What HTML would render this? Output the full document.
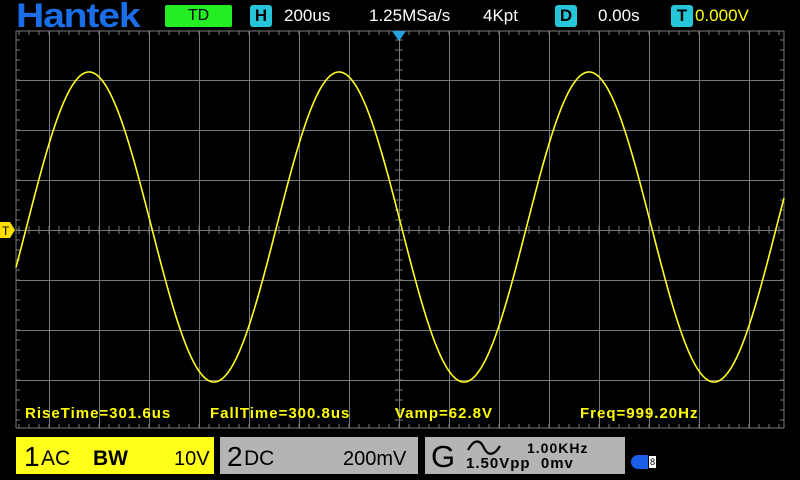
<!DOCTYPE html><html><head><style>
body{margin:0;width:800px;height:480px;background:#000;overflow:hidden;position:relative;font-family:"Liberation Sans",sans-serif}
.a{position:absolute}
.top{color:#fff;font-size:17px;top:6px}
.ic{background:#26c6da;color:#000;font-weight:bold;font-size:17px;width:22px;height:22px;text-align:center;line-height:22px;border-radius:3px;top:5px}
.m{color:#ffff00;font-size:15px;top:405px;font-weight:bold;letter-spacing:1px}
</style></head><body>
<div class="a" style="left:16px;top:-1px;line-height:34px;color:#1a6fe8;font-size:34px;font-weight:bold;letter-spacing:-1px;transform:scaleX(1.15);transform-origin:left">Hantek</div>
<div class="a" style="left:165px;top:5px;width:67px;height:22px;background:#22ee22;border-radius:2px;text-align:center;line-height:22px;font-size:16px">TD</div>
<div class="a ic" style="left:250px">H</div>
<div class="a top" style="left:284px">200us</div>
<div class="a top" style="left:369px">1.25MSa/s</div>
<div class="a top" style="left:483px">4Kpt</div>
<div class="a ic" style="left:555px">D</div>
<div class="a top" style="left:598px">0.00s</div>
<div class="a ic" style="left:671px">T</div>
<div class="a top" style="left:695px;color:#ffff00">0.000V</div>
<svg class="a" style="left:0;top:0" width="800" height="480" id="s">
<g stroke="#7a7a7a" stroke-width="1" fill="none" id="g"></g>
<polygon points="392,31 406,31 399,41" fill="#26a0e0"/>
<polygon points="0,222 10,222 15,230 10,238 0,238" fill="#ffe000"/>
<text x="2" y="235" font-size="12" font-family="Liberation Sans">T</text>
<path id="w" stroke="#ffff22" stroke-width="1.6" fill="none"/>
</svg>
<div class="a m" style="left:25px">RiseTime=301.6us</div>
<div class="a m" style="left:210px">FallTime=300.8us</div>
<div class="a m" style="left:395px">Vamp=62.8V</div>
<div class="a m" style="left:580px">Freq=999.20Hz</div>
<div class="a" style="left:16px;top:437px;width:198px;height:37px;background:#ffff1a"></div>
<div class="a" style="left:24px;top:441px;font-size:28px">1</div>
<div class="a" style="left:41px;top:447px;font-size:21px">AC</div>
<div class="a" style="left:93px;top:447px;font-size:21px;font-weight:bold">BW</div>
<div class="a" style="left:174px;top:448px;font-size:20px">10V</div>
<div class="a" style="left:220px;top:437px;width:198px;height:37px;background:#b4b4b4"></div>
<div class="a" style="left:227px;top:441px;font-size:28px">2</div>
<div class="a" style="left:244px;top:447px;font-size:21px">DC</div>
<div class="a" style="left:343px;top:448px;font-size:20px">200mV</div>
<div class="a" style="left:425px;top:437px;width:200px;height:37px;background:#b4b4b4"></div>
<div class="a" style="left:431px;top:439px;font-size:31px">G</div>
<svg class="a" style="left:466px;top:440px" width="36" height="16"><path d="M2,10 C8,-1 14,-1 18,8 C22,16 28,16 34,6" stroke="#000" stroke-width="2.2" fill="none"/></svg>
<div class="a" style="left:527px;top:440px;font-size:14px;font-weight:bold;letter-spacing:1px">1.00KHz</div>
<div class="a" style="left:466px;top:455px;font-size:15px;font-weight:bold;letter-spacing:1px">1.50Vpp&nbsp; 0mv</div>
<div class="a" style="left:631px;top:455px;width:18px;height:14px;background:#1a5ee8;border-radius:8px 2px 2px 8px"></div>
<div class="a" style="left:648px;top:455px;width:7px;height:12px;background:#fff;border:1px solid #000;font-size:9px;line-height:12px;text-align:center">8</div>
<script>
var g=document.getElementById('g'),h='';
function L(x1,y1,x2,y2){h+='<line x1="'+x1+'" y1="'+y1+'" x2="'+x2+'" y2="'+y2+'"/>';}
L(16,31,784,31);L(16,428,784,428);L(16,31,16,428);L(784,31,784,428);
for(var x=49;x<784;x+=50)L(x+.5,31,x+.5,428);
for(var y=80;y<428;y+=50)L(16,y+.5,784,y+.5);
for(var x=19;x<784;x+=10){L(x,230,x,226);L(x,230,x,234);L(x,31,x,35);L(x,428,x,424);}
for(var y=40;y<428;y+=10){L(399,y,395,y);L(399,y,403,y);L(16,y,20,y);L(784,y,780,y);}
g.innerHTML=h;
var d='';for(var x=16;x<=784;x++){var y=227-155*Math.cos(2*Math.PI*(x-339)/250);d+=(x==16?'M':'L')+x+','+y.toFixed(1);}
document.getElementById('w').setAttribute('d',d);
</script>
</body></html>
